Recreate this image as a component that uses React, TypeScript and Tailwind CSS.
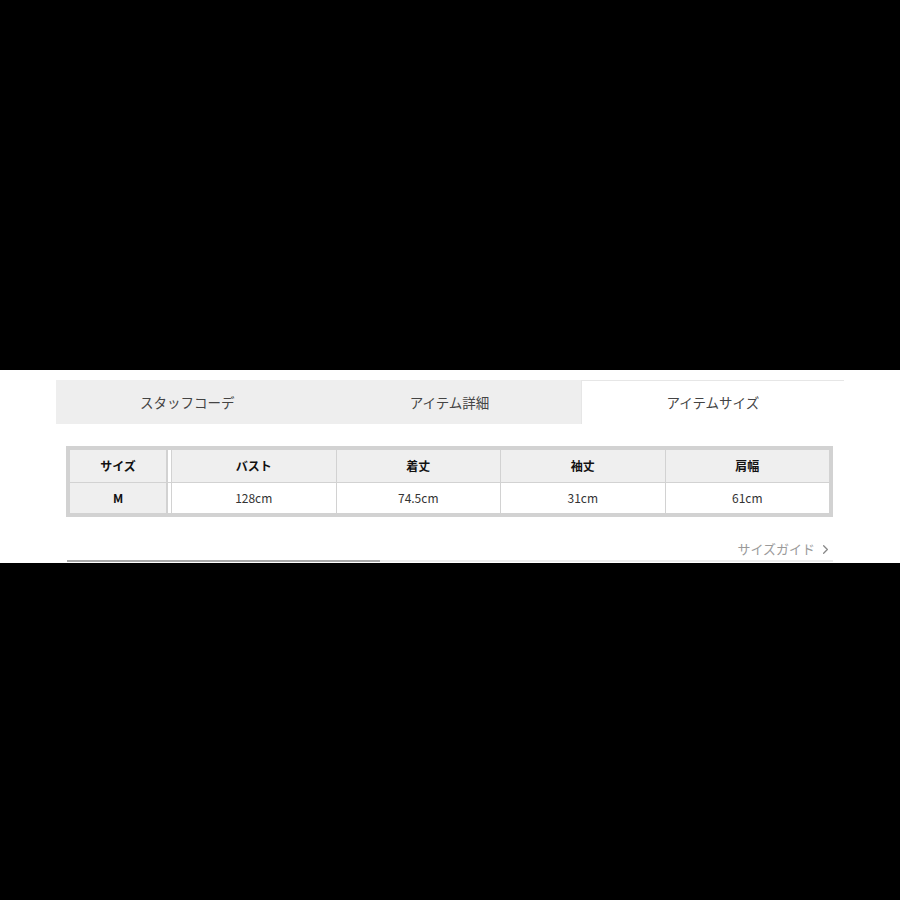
import { ChevronRight } from "lucide-react"

const cols = ["バスト", "着丈", "袖丈", "肩幅"]
const vals = ["128cm", "74.5cm", "31cm", "61cm"]

export default function App() {
  return (
    <div
      className="h-[900px] w-[900px] bg-black flex flex-col"
      style={{ fontFamily: '"Noto Sans CJK JP", "Noto Sans", sans-serif' }}
    >
      <div className="h-[370px]" />
      <div className="h-[193px] bg-white flex flex-col">
        {/* tabs */}
        <div className="mt-[10px] ml-[56px] w-[788px] h-[44px] flex text-[13.5px] text-[#444]">
          <div className="flex-1 bg-[#eeeeee] flex items-center justify-center">スタッフコーデ</div>
          <div className="flex-1 bg-[#eeeeee] flex items-center justify-center">アイテム詳細</div>
          <div className="flex-1 bg-white border-t border-l border-[#e6e6e6] flex items-center justify-center">
            アイテムサイズ
          </div>
        </div>

        {/* size table */}
        <div className="mt-[22px] ml-[66px] w-[767px] border-4 border-[#d2d2d2] flex flex-col text-[12px]">
          <div className="h-[32px] flex bg-[#efefef] font-bold text-[#111]">
            <div className="w-[98px] border-r-2 border-[#d2d2d2] flex items-center justify-center">サイズ</div>
            <div className="w-[3px] bg-white" />
            <div className="flex-1 flex border-l border-[#d2d2d2]">
              {cols.map((c, i) => (
                <div
                  key={c}
                  className={`flex-1 flex items-center justify-center ${i < 3 ? "border-r border-[#d2d2d2]" : ""}`}
                >
                  {c}
                </div>
              ))}
            </div>
          </div>
          <div className="h-px bg-[#d2d2d2]" />
          <div className="h-[30px] flex text-[#333]">
            <div className="w-[98px] bg-[#efefef] border-r-2 border-[#d2d2d2] flex items-center justify-center font-bold text-[#111]">
              M
            </div>
            <div className="w-[3px] bg-white" />
            <div className="flex-1 flex border-l border-[#d2d2d2]">
              {vals.map((v, i) => (
                <div
                  key={v}
                  className={`flex-1 flex items-center justify-center ${i < 3 ? "border-r border-[#d2d2d2]" : ""}`}
                >
                  {v}
                </div>
              ))}
            </div>
          </div>
        </div>

        {/* guide link */}
        <div className="mt-[22px] h-[20px] ml-[66px] w-[767px] flex justify-end items-center">
          <span className="text-[13px] text-[#9a9a9a] flex items-center">
            サイズガイド
            <ChevronRight className="w-[15px] h-[15px] ml-[3px] text-[#888]" strokeWidth={2} />
          </span>
        </div>

        <div className="mt-[1px] ml-[67px] w-[766px] h-[2px] flex">
          <div className="w-[313px] bg-[#a8a8a8]" />
          <div className="flex-1 bg-[#ececec]" />
        </div>
      </div>
      <div className="flex-1" />
    </div>
  )
}
